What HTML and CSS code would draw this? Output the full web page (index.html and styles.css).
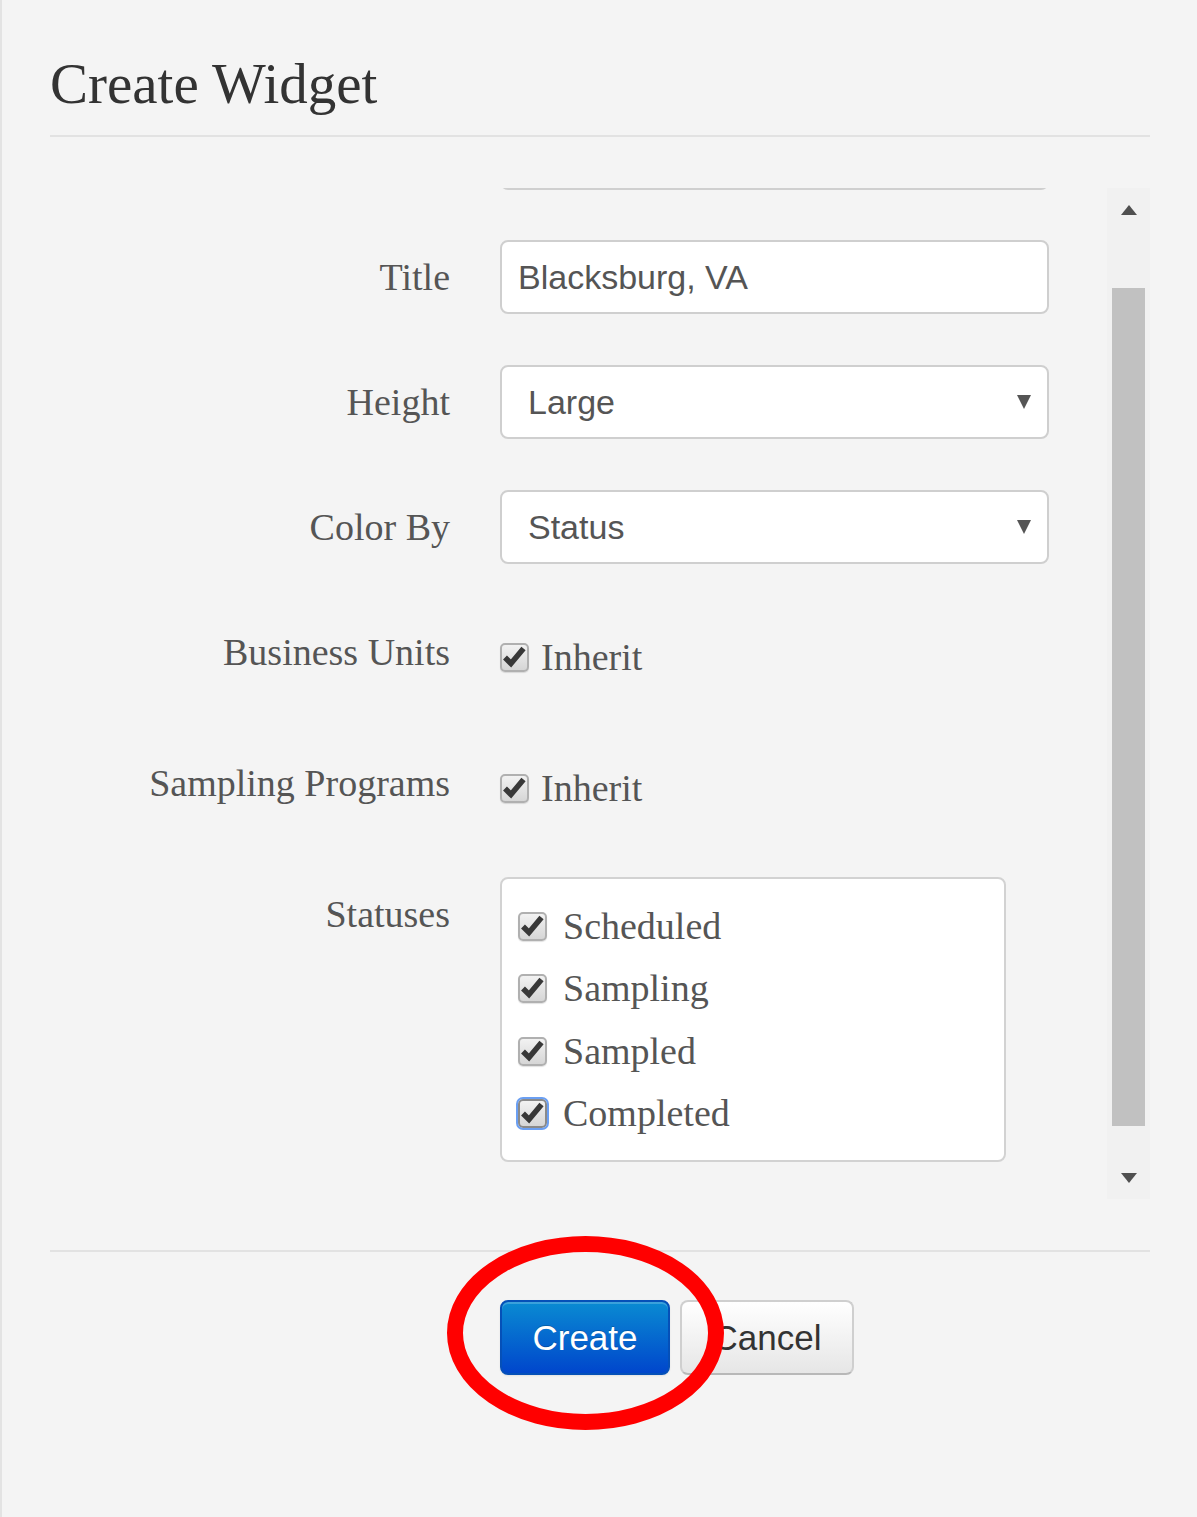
FILE: index.html
```html
<!DOCTYPE html>
<html lang="en">
<head>
<meta charset="utf-8">
<title>Create Widget</title>
<link rel="stylesheet" href="styles.css">
</head>
<body>
<div class="modal">
  <div class="modal-header">
    <h1 class="modal-title">Create Widget</h1>
  </div>

  <div class="modal-body">
    <div class="scroll-content">
      <div class="form-row form-row--partial">
        <div class="form-label"></div>
        <div class="form-control"><div class="text-input"></div></div>
      </div>

      <div class="form-row form-row--first">
        <div class="form-label">Title</div>
        <div class="form-control"><div class="text-input">Blacksburg, VA</div></div>
      </div>

      <div class="form-row">
        <div class="form-label">Height</div>
        <div class="form-control">
          <div class="select-input"><span>Large</span><span class="select-arrow"></span></div>
        </div>
      </div>

      <div class="form-row">
        <div class="form-label">Color By</div>
        <div class="form-control">
          <div class="select-input"><span>Status</span><span class="select-arrow"></span></div>
        </div>
      </div>

      <div class="form-row form-row--check">
        <div class="form-label">Business Units</div>
        <div class="form-control form-control--check">
          <label class="check">
            <span class="checkbox"><svg viewBox="0 0 25 25"><path d="M3 12.5 L9 18.5 L21.5 3.5"/></svg></span>
            <span class="check-text">Inherit</span>
          </label>
        </div>
      </div>

      <div class="form-row form-row--check">
        <div class="form-label">Sampling Programs</div>
        <div class="form-control form-control--check">
          <label class="check">
            <span class="checkbox"><svg viewBox="0 0 25 25"><path d="M3 12.5 L9 18.5 L21.5 3.5"/></svg></span>
            <span class="check-text">Inherit</span>
          </label>
        </div>
      </div>

      <div class="form-row">
        <div class="form-label">Statuses</div>
        <div class="form-control">
          <div class="status-box">
            <label class="check status-item">
              <span class="checkbox"><svg viewBox="0 0 25 25"><path d="M3 12.5 L9 18.5 L21.5 3.5"/></svg></span>
              <span class="check-text">Scheduled</span>
            </label>
            <label class="check status-item">
              <span class="checkbox"><svg viewBox="0 0 25 25"><path d="M3 12.5 L9 18.5 L21.5 3.5"/></svg></span>
              <span class="check-text">Sampling</span>
            </label>
            <label class="check status-item">
              <span class="checkbox"><svg viewBox="0 0 25 25"><path d="M3 12.5 L9 18.5 L21.5 3.5"/></svg></span>
              <span class="check-text">Sampled</span>
            </label>
            <label class="check status-item">
              <span class="checkbox checkbox--focus"><svg viewBox="0 0 25 25"><path d="M3 12.5 L9 18.5 L21.5 3.5"/></svg></span>
              <span class="check-text">Completed</span>
            </label>
          </div>
        </div>
      </div>
    </div>

    <div class="scrollbar">
      <div class="sb-button"><span class="sb-arrow sb-arrow--up"></span></div>
      <div class="sb-track"><div class="sb-thumb"></div></div>
      <div class="sb-button"><span class="sb-arrow sb-arrow--down"></span></div>
    </div>
  </div>

  <div class="modal-footer">
    <div class="actions">
      <button class="btn btn-primary" type="button">Create</button>
      <button class="btn btn-default" type="button">Cancel</button>
      <svg class="annotation" viewBox="0 0 300 210" width="300" height="210">
        <ellipse cx="145.5" cy="105" rx="130.5" ry="89"/>
      </svg>
    </div>
  </div>
</div>
</body>
</html>
```

FILE: styles.css
```css
* {
  box-sizing: border-box;
}

html, body {
  margin: 0;
  padding: 0;
  background: #f4f4f4;
}

body {
  font-family: "Liberation Serif", "Times New Roman", serif;
  color: #555;
}

.modal {
  min-height: 1517px;
  border-left: 2px solid #e3e3e3;
  padding: 0 47px 0 48px;
}

.modal-header {
  padding-top: 50px;
  padding-bottom: 17px;
  border-bottom: 2px solid #e2e2e2;
}

.modal-title {
  margin: 0;
  font-family: "Liberation Serif", "Times New Roman", serif;
  font-weight: normal;
  font-size: 57px;
  line-height: 68px;
  color: #333;
}

.modal-body {
  display: flex;
  margin-top: 51px;
  height: 1011px;
}

.scroll-content {
  flex: 1;
  overflow: hidden;
}

.form-row {
  display: flex;
  align-items: flex-start;
  margin-top: 51px;
}

.form-row--partial {
  margin-top: -72px;
}

.form-row--first {
  margin-top: 50px;
}

.form-row--check {
  height: 80px;
}

.form-label {
  width: 400px;
  flex: none;
  text-align: right;
  font-size: 38px;
  line-height: 74px;
  color: #555;
  white-space: nowrap;
}

.form-control {
  margin-left: 50px;
}

.form-control--check {
  padding-top: 28px;
}

.text-input,
.select-input {
  width: 549px;
  height: 74px;
  border: 2px solid #cfcfcf;
  border-radius: 8px;
  background: #fff;
  font-family: "Liberation Sans", Arial, sans-serif;
  font-size: 34px;
  line-height: 70px;
  color: #555;
}

.text-input {
  padding-left: 16px;
}

.select-input {
  display: flex;
  justify-content: space-between;
  align-items: center;
  padding-left: 26px;
  padding-right: 16px;
}

.select-arrow {
  width: 0;
  height: 0;
  border-left: 7.5px solid transparent;
  border-right: 7.5px solid transparent;
  border-top: 14px solid #555;
}

.check {
  display: flex;
  align-items: center;
}

.checkbox {
  width: 29px;
  height: 29px;
  flex: none;
  border: 2px solid #b0b0b0;
  border-radius: 5px;
  background: linear-gradient(#f2f2f2, #d6d6d6);
  box-shadow: 0 1px 1px rgba(0, 0, 0, 0.12);
  display: flex;
}

.checkbox svg {
  width: 25px;
  height: 25px;
}

.checkbox path {
  fill: none;
  stroke: #383838;
  stroke-width: 5.5;
  stroke-linejoin: miter;
  stroke-linecap: butt;
}

.checkbox--focus {
  outline: 2px solid #6b9ff2;
  outline-offset: 0;
  border-color: #8a8a8a;
}

.check-text {
  margin-left: 12px;
  font-size: 38px;
  line-height: 29px;
  color: #555;
  white-space: nowrap;
}

.status-box {
  width: 506px;
  height: 285px;
  border: 2px solid #d2d2d2;
  border-radius: 8px;
  background: #fff;
  padding: 16px 16px 15px;
}

.status-item {
  height: 62.5px;
}

.status-item .check-text {
  margin-left: 16px;
}

.scrollbar {
  width: 43px;
  flex: none;
  display: flex;
  flex-direction: column;
  background: #f1f1f1;
}

.sb-button {
  height: 43px;
  flex: none;
  display: flex;
  align-items: center;
  justify-content: center;
}

.sb-arrow {
  width: 0;
  height: 0;
  border-left: 8.5px solid transparent;
  border-right: 8.5px solid transparent;
}

.sb-arrow--up {
  border-bottom: 10px solid #505050;
}

.sb-arrow--down {
  border-top: 10px solid #505050;
}

.sb-track {
  flex: 1;
  padding: 57px 5px 30px;
  display: flex;
}

.sb-thumb {
  flex: 1;
  background: #c1c1c1;
}

.modal-footer {
  margin-top: 51px;
  border-top: 2px solid #e2e2e2;
  padding-top: 48px;
}

.actions {
  position: relative;
  display: flex;
  gap: 10px;
  padding-left: 450px;
}

.btn {
  height: 75px;
  border-radius: 8px;
  font-family: "Liberation Sans", Arial, sans-serif;
  font-size: 35px;
  padding: 0;
  cursor: pointer;
}

.btn-primary {
  width: 170px;
  color: #fff;
  border: 2px solid #0550b8;
  background: linear-gradient(#0a8bd2, #0046cc);
  text-shadow: 0 -1px 0 rgba(0, 0, 0, 0.2);
  box-shadow: inset 0 2px 0 rgba(255, 255, 255, 0.2), 0 1px 2px rgba(0, 0, 0, 0.08);
}

.btn-default {
  width: 174px;
  color: #333;
  border: 2px solid #cfcfcf;
  border-bottom-color: #b8b8b8;
  background: linear-gradient(#ffffff, #e6e6e6);
}

.annotation {
  position: absolute;
  left: 390px;
  top: -72px;
  pointer-events: none;
}

.annotation ellipse {
  fill: none;
  stroke: #ff0000;
  stroke-width: 16;
}
```
